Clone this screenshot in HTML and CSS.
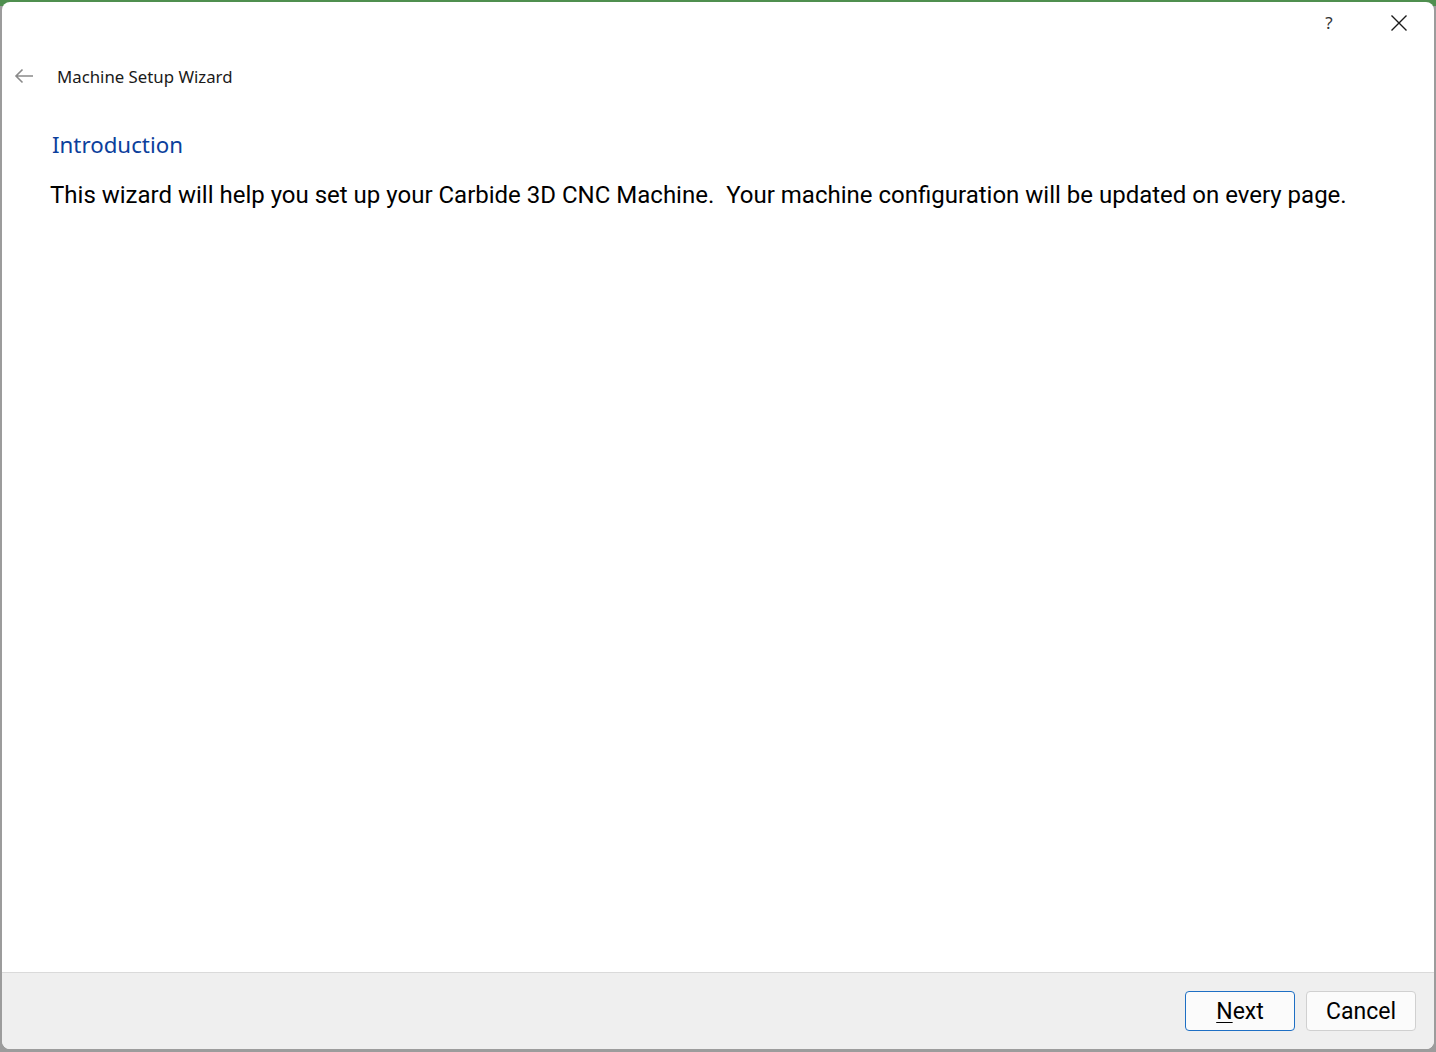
FILE: index.html
```html
<!DOCTYPE html>
<html>
<head>
<meta charset="utf-8">
<link rel="stylesheet" href="styles.css">
</head>
<body>
<div class="window">
  <div class="titlebar">
    <span class="tb-help">?</span>
    <span class="tb-close">
      <svg width="18" height="18" viewBox="0 0 18 18"><path d="M1.5 1.5 L16.5 16.5 M16.5 1.5 L1.5 16.5" stroke="#1a1a1a" stroke-width="1.4" fill="none"/></svg>
    </span>
  </div>
  <div class="navbar">
    <svg class="back" width="20" height="16" viewBox="0 0 20 16"><path d="M19 8 H2 M8.5 1.5 L2 8 L8.5 14.5" stroke="#8a8a8a" stroke-width="1.6" fill="none"/></svg>
    <span class="nav-title">Machine Setup Wizard</span>
  </div>
  <div class="content">
    <h1 class="heading">Introduction</h1>
    <p class="intro">This wizard will help you set up your Carbide 3D CNC Machine.&nbsp; Your machine configuration will be updated on every page.</p>
  </div>
  <div class="footer">
    <button class="btn btn-primary"><u>N</u>ext</button>
    <button class="btn">Cancel</button>
  </div>
</div>
</body>
</html>
```

FILE: styles.css
```css
html, body {
  margin: 0;
  padding: 0;
}
body {
  width: 1436px;
  height: 1052px;
  background: linear-gradient(#4f8f4f 0, #4f8f4f 6px, #9c9c9c 6px);
  overflow: hidden;
  padding: 2px 2px 3px 2px;
  box-sizing: border-box;
}
.window {
  height: 100%;
  background: #ffffff;
  border-radius: 8px;
  overflow: hidden;
  display: flex;
  flex-direction: column;
}
.titlebar {
  height: 42px;
  display: flex;
  justify-content: flex-end;
  align-items: center;
  flex: none;
}
.tb-help {
  font-family: "Noto Sans", sans-serif;
  font-size: 17px;
  color: #333;
  width: 70px;
  text-align: center;
  padding-bottom: 2px;
}
.tb-close {
  width: 70px;
  display: flex;
  justify-content: center;
  align-items: center;
}
.navbar {
  height: 62px;
  display: flex;
  align-items: center;
  flex: none;
  padding-top: 3px;
  box-sizing: border-box;
}
.back {
  margin-left: 12px;
  margin-right: 23px;
  position: relative;
  top: -1px;
}
.nav-title {
  font-family: "Noto Sans", sans-serif;
  font-size: 16.8px;
  color: #1a1a1a;
}
.content {
  flex: 1;
  padding: 0 48px;
}
.heading {
  font-family: "Noto Sans", sans-serif;
  font-weight: normal;
  font-size: 22.3px;
  color: #0c3f9c;
  margin: 23px 0 0 2px;
  line-height: 32px;
}
.intro {
  font-family: Roboto, sans-serif;
  font-size: 24px;
  color: #000;
  margin: 18px 0 0 0;
  line-height: 32px;
}
.footer {
  flex: none;
  height: 77px;
  background: #efefef;
  border-top: 1px solid #dadada;
  display: flex;
  justify-content: flex-end;
  align-items: flex-start;
  gap: 11px;
  padding: 18px 18px 0 0;
  box-sizing: border-box;
}
.btn {
  width: 110px;
  height: 40px;
  background: #fbfbfb;
  border: 1px solid #d0d0d0;
  border-radius: 4px;
  font-family: Roboto, sans-serif;
  font-size: 23px;
  color: #000;
  padding: 0;
}
.btn-primary {
  border-color: #1e6fc4;
}
.btn u {
  text-decoration-thickness: 1px;
  text-underline-offset: 3px;
}
```
